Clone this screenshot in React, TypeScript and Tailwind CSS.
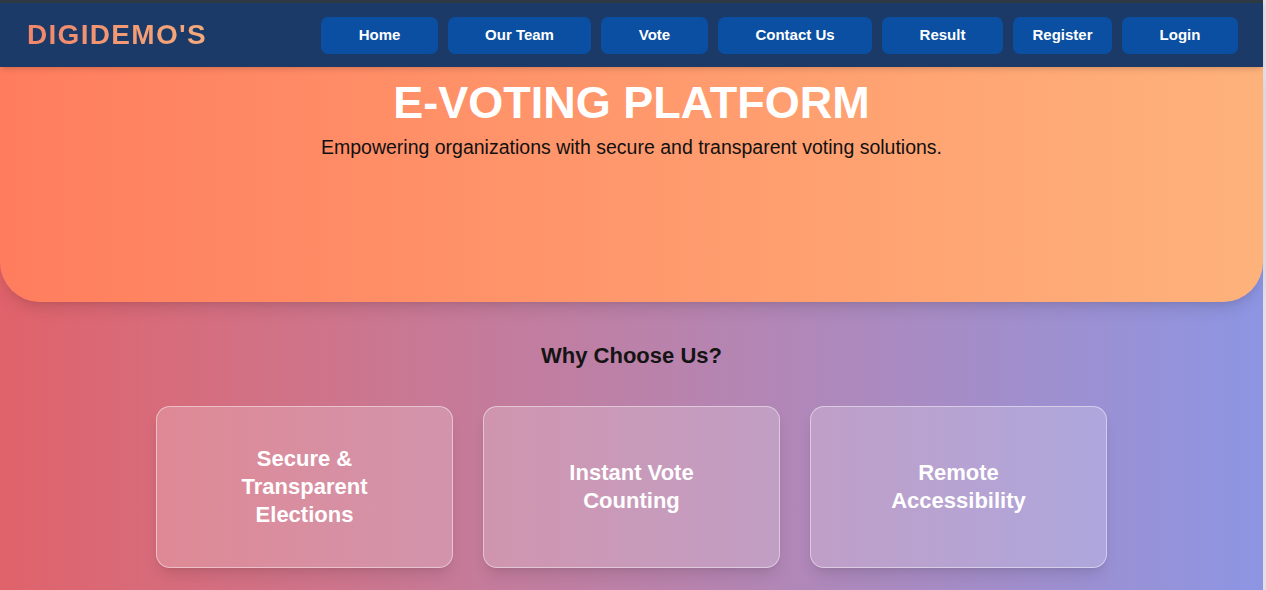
const navLinks = [
    { label: "Home", width: "w-[117px]" },
    { label: "Our Team", width: "w-[143px]" },
    { label: "Vote", width: "w-[107px]" },
    { label: "Contact Us", width: "w-[154px]" },
    { label: "Result", width: "w-[121px]" },
    { label: "Register", width: "w-[99px]" },
    { label: "Login", width: "w-[116px]" },
];

const features = [
    "Secure & Transparent Elections",
    "Instant Vote Counting",
    "Remote Accessibility",
];

const Navbar = () => {
    return (
        <header className="border-t-[3px] border-[#2e3a43] bg-[#1b3a67] shadow-md relative z-10">
            <nav className="h-16 flex items-center justify-between pl-[27px] pr-[25px]">
                <span className="text-[28px] font-bold tracking-[1.3px] bg-gradient-to-r from-[#f0866a] to-[#f5ab7c] bg-clip-text text-transparent">
                    DIGIDEMO'S
                </span>
                <ul className="flex gap-[10px]">
                    {navLinks.map((link) => (
                        <li key={link.label}>
                            <button
                                type="button"
                                className={`${link.width} h-[37px] rounded-[7px] bg-[#0a4fa2] text-white text-[15px] font-bold hover:bg-[#0d5cba] transition`}
                            >
                                {link.label}
                            </button>
                        </li>
                    ))}
                </ul>
            </nav>
        </header>
    );
};

const Hero = () => {
    return (
        <section className="h-[235px] pt-[13px] text-center rounded-b-[40px] bg-gradient-to-r from-[#ff7d5e] to-[#feb27b] shadow-lg">
            <h1 className="text-[45px] leading-none font-bold text-white">
                E-VOTING PLATFORM
            </h1>
            <p className="mt-[9px] text-[19.5px] leading-[27px] text-[#111]">
                Empowering organizations with secure and transparent voting solutions.
            </p>
        </section>
    );
};

const Features = () => {
    return (
        <section className="pt-[37px] pb-[22px] text-center">
            <h2 className="text-[22px] leading-[33px] font-bold text-[#141414]">
                Why Choose Us?
            </h2>
            <div className="mt-[34px] flex justify-center gap-[30px]">
                {features.map((item) => (
                    <div
                        key={item}
                        className="w-[297px] h-[162px] px-[64px] flex items-center justify-center rounded-[14px] border-[1.5px] border-white/45 bg-white/20 shadow-lg"
                    >
                        <h3 className="text-[22px] leading-[28px] font-bold text-white">
                            {item}
                        </h3>
                    </div>
                ))}
            </div>
        </section>
    );
};

export default function App() {
    return (
        <div className="min-h-screen flex bg-[#e4dfe6] pr-[3px] font-['Liberation_Sans',Arial,sans-serif]">
            <div className="flex-1 bg-gradient-to-r from-[#e0626a] to-[#8d95e3]">
                <Navbar />
                <Hero />
                <Features />
            </div>
        </div>
    );
}
